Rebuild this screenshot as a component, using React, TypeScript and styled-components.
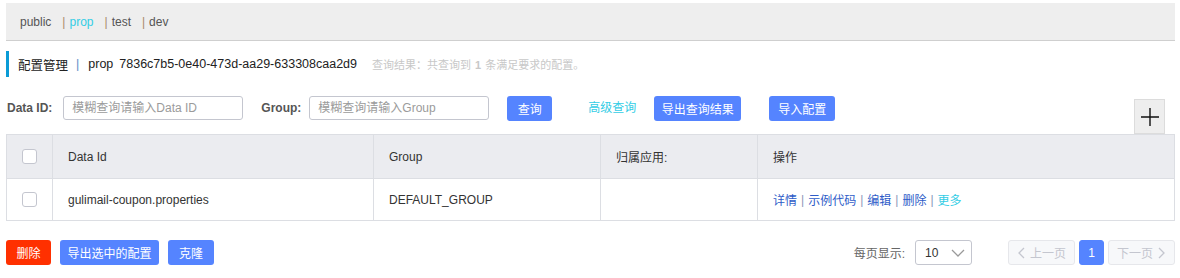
import React from "react";
import styled, { createGlobalStyle } from "styled-components";

const GlobalStyle = createGlobalStyle`
  body {
    margin: 0;
    background: #fff;
    font-family: "Liberation Sans", "Noto Sans CJK SC", sans-serif;
    font-size: 12px;
    color: #333;
  }
`;

const Page = styled.div`
  padding: 3px 5px 0 6px;
`;

// namespace tabs
const TopBar = styled.div`
  height: 37px;
  background: #eeeeee;
  border-bottom: 1px solid #cfcfcf;
  display: flex;
  align-items: center;
  padding-left: 14px;
`;

const Tab = styled.span<{ active?: boolean }>`
  color: ${(p) => (p.active ? "#33cde5" : "#555")};
  margin-right: 11px;
`;

const Sep = styled.span`
  color: #a88a6a;
  margin-right: 4px;
`;

// title row
const TitleRow = styled.div`
  margin-top: 10px;
  height: 26px;
  border-left: 3px solid #0a9bd6;
  padding-left: 9px;
  display: flex;
  align-items: center;
  font-size: 12.5px;
  color: #222;
`;

const TitleSep = styled.span`
  color: #5a8fc8;
  margin: 0 9px 0 8px;
`;

const Uuid = styled.span`
  margin-left: 6px;
`;

const ResultText = styled.span`
  margin-left: 15px;
  font-size: 11px;
  color: #c8c8c8;
  b {
    margin: 0 4px;
    font-weight: 700;
  }
`;

// search bar
const SearchRow = styled.div`
  margin-top: 19px;
  display: flex;
  align-items: flex-start;
`;

const Label = styled.span<{ gap?: number; after?: number }>`
  font-weight: 700;
  color: #555;
  line-height: 25px;
  margin-left: ${(p) => p.gap || 0}px;
  margin-right: ${(p) => p.after || 11}px;
`;

const Input = styled.input`
  box-sizing: border-box;
  width: 180px;
  height: 24px;
  border: 1px solid #c4c6cf;
  border-radius: 3px;
  padding: 0 8px;
  font: inherit;
  font-size: 12px;
  outline: none;
  &::placeholder {
    color: #9b9b9b;
  }
`;

const Button = styled.button<{ w: number; ml?: number; danger?: boolean }>`
  box-sizing: border-box;
  width: ${(p) => p.w}px;
  height: 25px;
  margin-left: ${(p) => p.ml || 0}px;
  border: none;
  border-radius: 3px;
  background: ${(p) => (p.danger ? "#ff3000" : "#5584ff")};
  color: #fff;
  font: inherit;
  font-size: 12px;
  padding: 0;
  cursor: pointer;
`;

const LinkText = styled.span`
  margin-left: 36px;
  color: #33cde5;
  line-height: 25px;
`;

const PlusButton = styled.button`
  box-sizing: border-box;
  margin-left: auto;
  margin-right: 10px;
  margin-top: 3px;
  width: 31px;
  height: 35px;
  border: 1px solid #dcdcdc;
  background: #eeeeee;
  padding: 0;
  display: flex;
  align-items: center;
  justify-content: center;
`;

// table
const Table = styled.div`
  border: 1px solid #dcdee3;
  border-bottom: none;
`;

const Row = styled.div<{ head?: boolean }>`
  display: grid;
  grid-template-columns: 45px 321px 227px 157px 1fr;
  height: ${(p) => (p.head ? 43 : 41)}px;
  background: ${(p) => (p.head ? "#ebecf0" : "#fff")};
  border-bottom: 1px solid #dcdee3;
`;

const Cell = styled.div`
  display: flex;
  align-items: center;
  padding-left: 15px;
  border-left: 1px solid #dcdee3;
  color: #333;
  &:first-child {
    border-left: none;
    padding-left: 0;
    justify-content: center;
  }
`;

const Checkbox = styled.span`
  box-sizing: border-box;
  width: 15px;
  height: 15px;
  border: 1px solid #c4c6cf;
  border-radius: 3px;
  background: #fff;
`;

const Action = styled.span<{ more?: boolean }>`
  color: ${(p) => (p.more ? "#33cde5" : "#2e5cc8")};
`;

const ActionSep = styled.span`
  color: #8a97b8;
  margin: 0 4px;
`;

// footer
const Footer = styled.div`
  margin-top: 19px;
  display: flex;
  align-items: center;
`;

const PageSizeLabel = styled.span`
  margin-left: auto;
  color: #666;
`;

const Select = styled.div`
  box-sizing: border-box;
  margin-left: 10px;
  width: 57px;
  height: 25px;
  border: 1px solid #c4c6cf;
  border-radius: 3px;
  display: flex;
  align-items: center;
  justify-content: space-between;
  padding: 0 6px 0 9px;
  color: #333;
`;

const Pager = styled.div`
  margin-left: 36px;
  display: flex;
  gap: 4px;
`;

const PageBtn = styled.div<{ current?: boolean }>`
  box-sizing: border-box;
  height: 25px;
  min-width: 25px;
  padding: 0 ${(p) => (p.current ? 0 : 8)}px;
  border-radius: 3px;
  border: 1px solid ${(p) => (p.current ? "#5584ff" : "#e6e7eb")};
  background: ${(p) => (p.current ? "#5584ff" : "#f7f8fa")};
  color: ${(p) => (p.current ? "#fff" : "#c4c6cf")};
  display: flex;
  align-items: center;
  justify-content: center;
  gap: 4px;
  width: ${(p) => (p.current ? 25 : 67)}px;
`;

const Chevron = ({ dir, color }: { dir: "left" | "right" | "down"; color: string }) => {
  const d =
    dir === "left"
      ? "M7 1 L2 6 L7 11"
      : dir === "right"
      ? "M2 1 L7 6 L2 11"
      : "M1 3 L7 9 L13 3";
  const w = dir === "down" ? 14 : 9;
  return (
    <svg width={w} height={12} viewBox={`0 0 ${w} 12`}>
      <path d={d} fill="none" stroke={color} strokeWidth={1.3} />
    </svg>
  );
};

const App = () => {
  return (
    <Page>
      <GlobalStyle />
      <TopBar>
        <Tab>public</Tab>
        <Sep>|</Sep>
        <Tab active>prop</Tab>
        <Sep>|</Sep>
        <Tab>test</Tab>
        <Sep>|</Sep>
        <Tab>dev</Tab>
      </TopBar>

      <TitleRow>
        配置管理
        <TitleSep>|</TitleSep>
        prop
        <Uuid>7836c7b5-0e40-473d-aa29-633308caa2d9</Uuid>
        <ResultText>
          查询结果：共查询到<b>1</b>条满足要求的配置。
        </ResultText>
      </TitleRow>

      <SearchRow>
        <Label gap={1}>Data ID:</Label>
        <Input placeholder="模糊查询请输入Data ID" />
        <Label gap={18} after={8}>Group:</Label>
        <Input placeholder="模糊查询请输入Group" />
        <Button w={45} ml={18}>查询</Button>
        <LinkText>高级查询</LinkText>
        <Button w={87} ml={18}>导出查询结果</Button>
        <Button w={66} ml={28}>导入配置</Button>
        <PlusButton>
          <svg width="20" height="20" viewBox="0 0 20 20">
            <path d="M10 1 V19 M1 10 H19" stroke="#111" strokeWidth="1.4" />
          </svg>
        </PlusButton>
      </SearchRow>

      <Table>
        <Row head>
          <Cell>
            <Checkbox />
          </Cell>
          <Cell>Data Id</Cell>
          <Cell>Group</Cell>
          <Cell>归属应用:</Cell>
          <Cell>操作</Cell>
        </Row>
        <Row>
          <Cell>
            <Checkbox />
          </Cell>
          <Cell>gulimail-coupon.properties</Cell>
          <Cell>DEFAULT_GROUP</Cell>
          <Cell />
          <Cell>
            <Action>详情</Action>
            <ActionSep>|</ActionSep>
            <Action>示例代码</Action>
            <ActionSep>|</ActionSep>
            <Action>编辑</Action>
            <ActionSep>|</ActionSep>
            <Action>删除</Action>
            <ActionSep>|</ActionSep>
            <Action more>更多</Action>
          </Cell>
        </Row>
      </Table>

      <Footer>
        <Button w={45} danger>删除</Button>
        <Button w={99} ml={9}>导出选中的配置</Button>
        <Button w={46} ml={9}>克隆</Button>
        <PageSizeLabel>每页显示:</PageSizeLabel>
        <Select>
          10
          <Chevron dir="down" color="#999" />
        </Select>
        <Pager>
          <PageBtn>
            <Chevron dir="left" color="#c4c6cf" />
            上一页
          </PageBtn>
          <PageBtn current>1</PageBtn>
          <PageBtn>
            下一页
            <Chevron dir="right" color="#c4c6cf" />
          </PageBtn>
        </Pager>
      </Footer>
    </Page>
  );
};

export default App;
